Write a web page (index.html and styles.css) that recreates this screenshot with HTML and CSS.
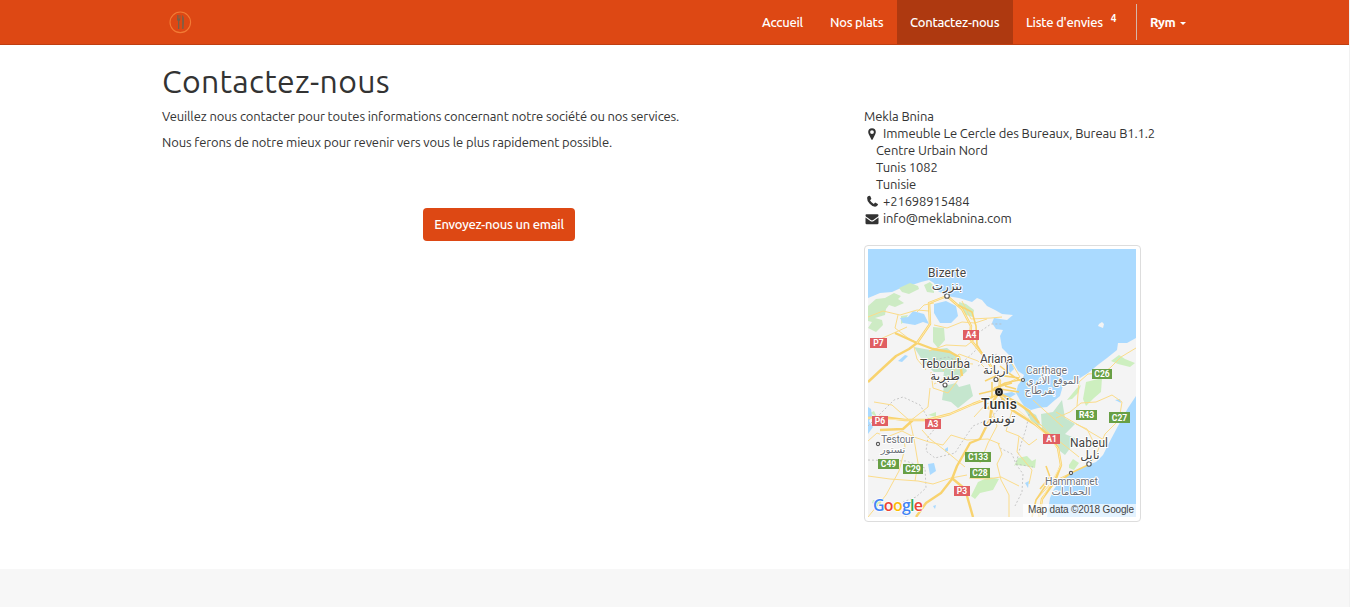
FILE: index.html
```html
<!DOCTYPE html>
<html lang="fr">
<head>
<meta charset="utf-8">
<title>Contactez-nous</title>
<link rel="stylesheet" href="styles.css">
</head>
<body>
<header class="navbar">
  <div class="container nav-inner">
    <a class="brand" aria-label="Mekla Bnina">
      <svg width="24" height="24" viewBox="0 0 24 24"><circle cx="12.300" cy="12.300" r="10.3" fill="none" stroke="#f27b35" stroke-width="1.1"/><path d="M9 5v4q0 2 1 2v8h1.300v-8q1 0 1-2V5h-.6v3.500h-.6V5h-.7v3.500h-.6V5zM14.200 5q2 1 1.700 7l-.4 7h-1.300z" fill="#73614b"/></svg>
    </a>
    <nav class="menu">
      <a class="item i1"><span>Accueil</span></a>
      <a class="item i2"><span>Nos plats</span></a>
      <a class="item active"><span>Contactez-nous</span></a>
      <a class="item wish"><span>Liste d'envies</span><sup>4</sup></a>
      <a class="user"><span>Rym</span><i class="caret"></i></a>
    </nav>
  </div>
</header>
<main class="container content">
  <h1>Contactez-nous</h1>
  <div class="row">
    <section class="left">
      <p>Veuillez nous contacter pour toutes informations concernant notre société ou nos services.</p>
      <p>Nous ferons de notre mieux pour revenir vers vous le plus rapidement possible.</p>
      <a class="btn"><span>Envoyez-nous un email</span></a>
    </section>
    <aside class="right">
      <address>
        <div>Mekla Bnina</div>
        <div class="line"><svg class="icon" viewBox="0 0 16 14"><path fill-rule="evenodd" d="M8 1.2a3.800 3.800 0 0 0-3.800 3.800c0 1 .3 1.600.7 2.400l2.500 5.100q.6.900 1.200 0l2.500-5.100c.4-.8.7-1.400.7-2.400A3.800 3.800 0 0 0 8 1.200zm0 2a1.900 1.900 0 1 1 0 3.800 1.900 1.900 0 0 1 0-3.800z"/></svg><span>Immeuble Le Cercle des Bureaux, Bureau B1.1.2</span></div>
        <div class="indent">Centre Urbain Nord</div>
        <div class="indent">Tunis 1082</div>
        <div class="indent">Tunisie</div>
        <div class="line"><svg class="icon phone" viewBox="0 0 16 14"><path d="M4 2.200 5.600 1.700q.4 0 .6.400l1.100 2.500q.1.400-.2.600L6 6.200q1.300 2.500 3.800 3.800l1.100-1.200q.3-.3.700-.1l2.200 1.200q.4.200.2.700-.6 2.200-3 2.100-2.800-.2-5.300-3Q2.800 6.600 3.100 4q.1-1.300.9-1.800z"/></svg><span>+21698915484</span></div>
        <div class="line"><svg class="icon" viewBox="0 0 16 14"><path d="M1.500 3.200q0-1 1-1h11q1 0 1 1c0 1-.8 1.600-1.500 2.100L9.200 8q-1.200.8-2.400 0L3 5.300C2.200 4.800 1.500 4.200 1.500 3.200zm0 2.400 4.800 3.500q1.700 1 3.400 0l4.800-3.500v5.400q0 1.200-1.200 1.200H2.700q-1.200 0-1.200-1.200z"/></svg><span>info@meklabnina.com</span></div>
      </address>
      <div class="thumb">
        <svg class="map" width="268" height="268" viewBox="0 0 268 268">
          <rect width="268" height="268" fill="#aadaff"/>
          <!-- mainland -->
          <path fill="#f4f4f4" d="M0 49 5 47 12 44 24 43 35 38 44 36 53 33 61 31 66 34 70 42 79 47 91 49 104 53 109 49 114 51 119 57 127 61 134 65 145 66 139 71 132 70 126 69 124 74 128 80 135 81 132 87 134 99 142 107 150 122 156 126 154 131 150 136 148 144 152 151 156 157 163 161 170 159 179 158 187 151 192 147 194 140 196 132 203 131 212 129 220 124 231 115 239 109 249 101 250 94 259 94 268 89V147L260 159 250 177 242 192 235 206 228 213 220 216 204 224 192 232 186 240 182 249 179 268H0z"/>
          <path fill="#f4f4f4" d="M230 77 231 75 234 73 236 75 235 79z"/>
          <!-- woodland -->
          <g fill="#cdebc4">
            <path d="M0 57 8 50 17 49 26 44 33 47 30 50 36 54 27 58 21 56 18 60 17 66 7 69 14 71 15 76 8 83 0 79 4 73 0 72z"/>
            <path d="M31 39 42 34 50 37 51 40 41 45 34 43zM56 36 62 33 66 37 66 44 59 43zM33 67 40 66 36 73 33 75zM65 78 76 79 77 91 70 99 65 93zM91 53 98 55 106 61 105 68 98 66 91 58z"/>
          </g>
          <g fill="#c5e6ce">
            <path d="M46 98 62 101 79 99 92 109 99 122 90 130 75 130 76 123 66 123 56 114zM76 137 88 134 91 138 102 135 105 147 90 159 83 153 74 151z"/>
            <path d="M154 157 161 162 168 166 173 177 164 174 160 166zM173 165 185 163 194 151 197 169 207 175 197 185 209 190 197 206 192 202 187 190 174 181z"/>
          </g>
          <g fill="#cdefbf">
            <path d="M218 133 234 129 233 143 226 149 218 157 215 150zM209 139 213 136 210 144 204 150 199 151zM243 112 251 106 257 110 267 114 262 118 250 115zM146 217 150 209 159 207 164 212 168 210 167 219 158 217 148 216zM201 216 205 210 211 214 206 221 201 219zM103 247 110 233 121 228 131 230 125 241 112 244 107 250zM60 166 68 163 68 168zM2 164 6 162 9 168zM5 251 14 251 12 257 4 254z"/>
          </g>
          <!-- lakes -->
          <path fill="#aadaff" d="M32 69 40 68 45 62 56 65 61 75 55 73 47 76 35 74zM66 55 78 52 88 57 90 67 83 74 72 74 66 64zM0 158 3 160 4 167 1 172 5 178 0 185zM60 215 66 214 68 222 62 226zM77 200 80 198 80 202 77 203zM30 112 37 106 40 107 34 113zM247 151 252 150 253 154zM157 234 161 232 160 239zM65 257 68 256 67 260zM133 145 144 143 148 145 138 151zM137 111 142 109 146 120 142 124z"/>
          <!-- administrative borders -->
          <g fill="none" stroke="#bbb" stroke-width=".8" stroke-dasharray="2 2">
            <path d="M0 177 10 167 26 151 35 148 52 156 60 169 68 178 60 188 58 202 67 209 87 204 94 193 105 177 122 170 129 162 135 147M60 112 80 108 94 114 108 101 110 84 123 75 134 75M0 211 38 212 57 219 58 239 48 248 35 253 38 268M162 161 158 180 153 195 148 215 155 225 154 243 147 257M132 199 144 205 148 215 165 218M110 117 129 105 135 115"/>
          </g>
          <!-- local roads -->
          <g fill="none" stroke="#fbdc8a" stroke-width="1">
            <path d="M0 68 15 62 32 66 49 61 61 62M30 66 27 79 40 89 49 94M49 63 56 56 66 54M39 78 28 83 8 92M66 76 79 79 94 73 107 74 119 70M94 52 103 70 123 69 134 68M61 102 78 96 98 97 111 87M46 98 49 110 58 121M75 122 91 105 110 112 121 123M66 135 82 127 93 114 105 115M62 139 60 158 42 172 46 190 50 214 47 232M0 192 9 184 19 188 34 182 46 188 61 193 75 196 83 186 99 191 120 190 132 195M0 227 22 230 50 232 65 235 83 229 99 226M0 268 18 246 31 222 37 199 36 187M97 218 79 203 62 190 54 181M112 214 120 194 129 177 123 158M101 229 119 230 133 228 151 237M141 268 141 246 133 231 129 215 134 205 130 194M144 162 138 182 151 187 149 203 164 221 161 235M171 174 181 184 201 200 211 208M188 163 212 177 236 191M209 157 211 133 220 125 235 124 242 119 253 108 268 99M188 169 202 163 213 154 228 153 244 146 254 153 251 171 237 185 227 208 220 216M151 187 161 196 169 190M135 136 152 128 143 113M106 168 118 155 132 151M6 153 24 156 42 172M63 123 65 139 80 144 93 127M165 151 176 161 195 178M168 251 184 233 203 224M208 175 219 180 228 198"/>
          </g>
          <!-- motorways -->
          <g fill="none" stroke-linejoin="round">
            <path stroke="#f8d36f" stroke-width="2.400" d="M79 47 61 54 62 75 49 94 41 100 28 107 15 119 0 133M0 169 14 168 37 171 59 171 82 165 105 155 124 148 131 144M79 47 94 60 103 77 102 90 119 111 132 132 131 145 144 161 168 176 182 187 190 199 193 216 187 232 174 250 171 268M12 181 35 180 45 171M27 84 49 94 65 100 82 103 91 108 94 127M85 230 97 240 105 268M124 154 122 170 112 190 102 194 89 217 84 230 73 244 58 254 48 268M131 144 148 153 161 162 171 174M130 145 120 160"/>
            <path stroke="#ffeab0" stroke-width="1" d="M79 47 61 54 62 75 49 94M0 169 37 171 59 171 82 165 131 144M79 47 94 60 103 77 102 90 119 111 132 132 131 145 168 176 190 199 193 216 174 250 171 268"/>
            <path stroke="#f8d36f" stroke-width="1.600" d="M90 56 104 63 108 77 109 96 118 111M178 236 168 251 164 268M178 217 182 228 172 240M124 141 137 134 156 130M126 139 144 134M117 132 130 126 151 129M137 137 148 140M111 145 132 140 151 143M124 133 124 149M132 117 142 125 153 132M192 232 203 224 220 216"/>
          </g>
          <rect x="155" y="255" width="113" height="13" fill="#fff" fill-opacity=".68"/>
          <!-- road shields -->
          <g class="shield" text-anchor="middle">
            <path fill="#e05e62" d="M2 89h17v10H2zM95 81h16v10H95zM4 167h16v10H4zM57 170h16v10H57zM175 185h17v10H175zM86 237h16v10H86z"/>
            <path fill="#689f45" d="M224 120h20v10h-20zM208 161h21v10h-21zM241 163h21v11h-21zM10 210h21v10H10zM35 215h20v10H35zM97 203h26v10H97zM102 219h20v10h-20z"/>
            <text x="10.500" y="97">P7</text><text x="103" y="89">A4</text><text x="12" y="175">P6</text><text x="65" y="178">A3</text><text x="183.500" y="193">A1</text><text x="94" y="245">P3</text><text x="234" y="128">C26</text><text x="218.500" y="169">R43</text><text x="251.500" y="171.500">C27</text><text x="20.500" y="218">C49</text><text x="45" y="223">C29</text><text x="110" y="211">C133</text><text x="112" y="227">C28</text>
          </g>
          <g fill="#fff" stroke="#555" stroke-width="1.100"><circle cx="79" cy="47" r="2.300"/><circle cx="77" cy="136" r="2"/><circle cx="128" cy="130.500" r="2"/><circle cx="155" cy="131" r="1.500"/><circle cx="10" cy="195" r="1.600"/><circle cx="221" cy="215" r="2.200"/><circle cx="203" cy="224" r="1.600"/></g>
          <circle cx="131" cy="143" r="3" fill="#aaa" stroke="#222" stroke-width="1.800"/><circle cx="131" cy="143" r="1.300" fill="#222"/>
          <!-- place names -->
          <g class="place">
            <text x="60" y="28" textLength="38">Bizerte</text><text class="ar" x="79" y="41" text-anchor="middle">بنزرت</text>
            <text x="52" y="119" textLength="50">Tebourba</text><text class="ar" x="77" y="131" text-anchor="middle">طبرية</text>
            <text x="112" y="114" textLength="33">Ariana</text><text class="ar" x="128" y="125" text-anchor="middle">أريانة</text>
            <text class="capital" x="113" y="160" textLength="36">Tunis</text><text class="ar large" x="131" y="174" text-anchor="middle">تونس</text>
            <text x="202" y="197.500" textLength="38">Nabeul</text><text class="ar" x="222" y="210" text-anchor="middle">نابل</text>
          </g>
          <g class="place minor">
            <text x="158" y="125" textLength="41">Carthage</text><text class="ar" x="158" y="135" textLength="53" lengthAdjust="spacingAndGlyphs">الموقع الأثري</text><text class="ar" x="172" y="145" text-anchor="middle">بقرطاج</text>
            <text x="13" y="194" textLength="33">Testour</text><text class="ar" x="25" y="204" text-anchor="middle">تستور</text>
            <text x="177" y="235.500" textLength="53">Hammamet</text><text class="ar" x="203" y="246" text-anchor="middle">الحمامات</text>
          </g>
          <text class="google" x="5" y="262" textLength="50"><tspan fill="#4285f4">G</tspan><tspan fill="#ea4335">o</tspan><tspan fill="#fbbc05">o</tspan><tspan fill="#4285f4">g</tspan><tspan fill="#34a853">l</tspan><tspan fill="#ea4335">e</tspan></text>
          <text class="credit" x="160" y="264" textLength="106">Map data ©2018 Google</text>
        </svg>
      </div>
    </aside>
  </div>
</main>
<footer class="footer"></footer>
</body>
</html>
```
FILE: styles.css
```css
* { box-sizing: border-box; }
body {
  margin: 0;
  width: 1350px;
  height: 607px;
  overflow: hidden;
  display: flex;
  flex-direction: column;
  border-right: 1px solid #f1f1f1;
  background: #fff;
  color: #333;
  font: 13px/17px Ubuntu, "Noto Sans", sans-serif;
  letter-spacing: -.12px;
}
.container { width: 1025px; margin-left: 162px; }
.navbar { height: 45px; flex: none; background: #dd4814; border-bottom: 1px solid #bf3e11; color: #fff; }
.nav-inner { height: 44px; display: flex; justify-content: space-between; }
.brand { display: flex; align-items: center; padding-left: 6px; }
.menu { display: flex; white-space: nowrap; font-weight: 500; letter-spacing: -.25px; }
.item { display: flex; align-items: center; height: 44px; padding: 0 13px; }
.i1 { width: 68px; }
.i2 { width: 80px; }
.active { width: 116px; background: #ae3910; }
.wish { width: 123px; }
.wish sup { font-size: 10px; font-weight: 700; line-height: 10px; margin: -7px 0 0 8px; }
.user { display: flex; align-items: center; width: 51px; height: 36px; margin-top: 4px; padding-left: 13px; border-left: 1px solid #d6b6aa; font-weight: 700; letter-spacing: -.5px; }
.caret { margin: 3px 0 0 5px; border: 3.500px solid transparent; border-top-color: #fff; border-bottom: 0; }
.content { flex: none; height: 524px; padding-top: 17px; }
h1 { margin: 0; height: 46px; font-size: 32px; line-height: 39px; font-weight: 400; letter-spacing: .3px; }
.row { display: flex; gap: 28px; white-space: nowrap; }
.left { width: 674px; display: flex; flex-direction: column; }
.left p { margin: 0 0 9px; }
.btn { align-self: center; margin-top: 48px; width: 152px; height: 33px; border-radius: 4px; background: #dd4814; color: #fff; display: flex; align-items: center; justify-content: center; font-weight: 500; letter-spacing: -.25px; }
.right { width: 300px; }
address { font-style: normal; height: 137px; }
.line { display: flex; align-items: center; height: 17px; }
.icon { width: 16px; height: 14px; margin-right: 3px; fill: #333; }
.phone { margin: -2px 3px 0 0; }
.indent { padding-left: 12px; }
.thumb { width: 277px; height: 277px; padding: 3px; border: 1px solid #ddd; border-radius: 4px; }
.map { display: block; letter-spacing: 0; }
.shield { font: 700 8.500px Roboto, sans-serif; fill: #fff; }
.place { font: 400 12px Roboto, sans-serif; fill: #444; stroke: #fff; stroke-width: 2px; paint-order: stroke; stroke-linejoin: round; }
.place .ar { font: 12px "DejaVu Sans", sans-serif; }
.place .capital { font-size: 14px; font-weight: 500; fill: #333; }
.place .large { font-size: 14px; }
.minor { font-size: 10.500px; fill: #6c7078; }
.minor .ar { font-size: 10px; }
.google { font: 600 16px "Open Sans", sans-serif; stroke: #fff; stroke-width: 1.500px; paint-order: stroke; }
.credit { font: 10px "Liberation Sans", sans-serif; fill: #444; }
.footer { flex: 1; background: #f7f7f7; }
```
